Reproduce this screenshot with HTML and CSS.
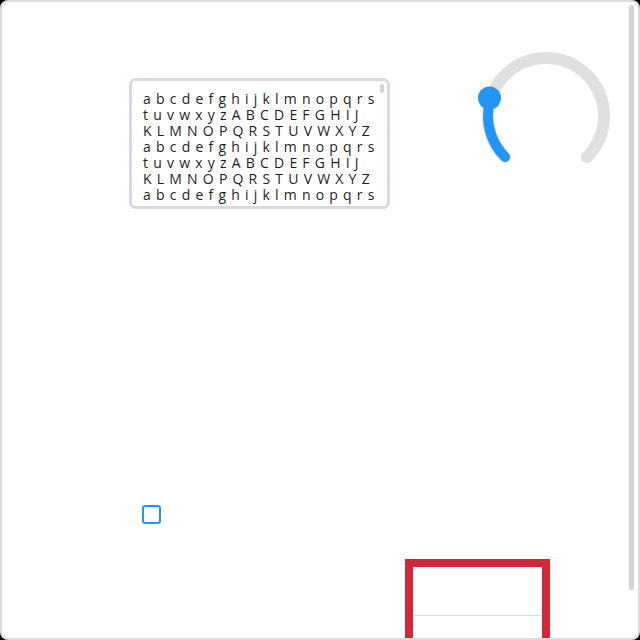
FILE: index.html
```html
<!DOCTYPE html>
<html lang="en">
<head>
<meta charset="utf-8">
<title>Widgets</title>
<link rel="stylesheet" href="styles.css">
</head>
<body>
<div class="window">
  <div class="frame">
    <div class="top-row">
      <div class="textbox">
        <div class="text-scroll">
          <div class="line">abcdefghijklmnopqrs</div>
          <div class="line">tuvwxyzABCDEFGHIJ</div>
          <div class="line">KLMNOPQRSTUVWXYZ</div>
          <div class="line">abcdefghijklmnopqrs</div>
          <div class="line">tuvwxyzABCDEFGHIJ</div>
          <div class="line">KLMNOPQRSTUVWXYZ</div>
          <div class="line">abcdefghijklmnopqrs</div>
        </div>
        <div class="text-thumb"></div>
      </div>
      <svg class="knob" width="150" height="140" viewBox="0 0 150 140">
        <path d="M35 117 A58 58 0 1 1 117 117" fill="none" stroke="#e0e0e0" stroke-width="12" stroke-linecap="round"/>
        <path d="M35 117 A58 58 0 0 1 20.7 58.6" fill="none" stroke="#2196f3" stroke-width="10" stroke-linecap="round"/>
        <circle cx="19.5" cy="58" r="11.5" fill="#2196f3"/>
      </svg>
    </div>
    <div class="checkbox"></div>
    <div class="redbox">
      <div class="redbox-row"></div>
      <div class="redbox-row"></div>
    </div>
  </div>
  <div class="frame-thumb"></div>
</div>
</body>
</html>
```

FILE: styles.css
```css
html {
  background: #000;
}
body {
  margin: 0;
  font-family: "Open Sans", "DejaVu Sans", sans-serif;
}
.window {
  position: relative;
  width: 640px;
  height: 640px;
}
.frame {
  box-sizing: border-box;
  width: 640px;
  height: 640px;
  border: 2px solid #dcdcdc;
  border-radius: 8px;
  background: #fff;
  overflow: hidden;
}
.frame-thumb {
  position: absolute;
  left: 629px;
  top: 5px;
  width: 5px;
  height: 585px;
  border-radius: 2px;
  background: #d4d4d4;
}
.top-row {
  display: flex;
  align-items: flex-start;
  padding: 38px 0 0 127px;
}
.textbox {
  position: relative;
  box-sizing: border-box;
  width: 261px;
  height: 131px;
  margin-top: 38px;
  border: 3px solid #ded6e4;
  border-radius: 7px;
  padding: 10px 0 0 11px;
  background: #fff;
}
.text-scroll {
  font-size: 14px;
  line-height: 16px;
  letter-spacing: 5.2px;
  color: #1e1e1e;
}
.text-thumb {
  position: absolute;
  top: 3px;
  right: 3px;
  width: 4px;
  height: 9px;
  border-radius: 2px;
  background: #d4d4d4;
}
.line {
  white-space: nowrap;
}
.knob {
  display: block;
  margin-left: 80px;
}
.checkbox {
  box-sizing: border-box;
  width: 19px;
  height: 19px;
  margin: 296px 0 0 140px;
  border: 2px solid #2196f3;
  border-radius: 3px;
}
.redbox {
  box-sizing: border-box;
  width: 145px;
  height: 132px;
  margin: 35px 0 0 403px;
  border: 8px solid #d0273b;
}
.redbox-row {
  height: 48px;
}
.redbox-row + .redbox-row {
  border-top: 1px solid #dddddd;
}
```
